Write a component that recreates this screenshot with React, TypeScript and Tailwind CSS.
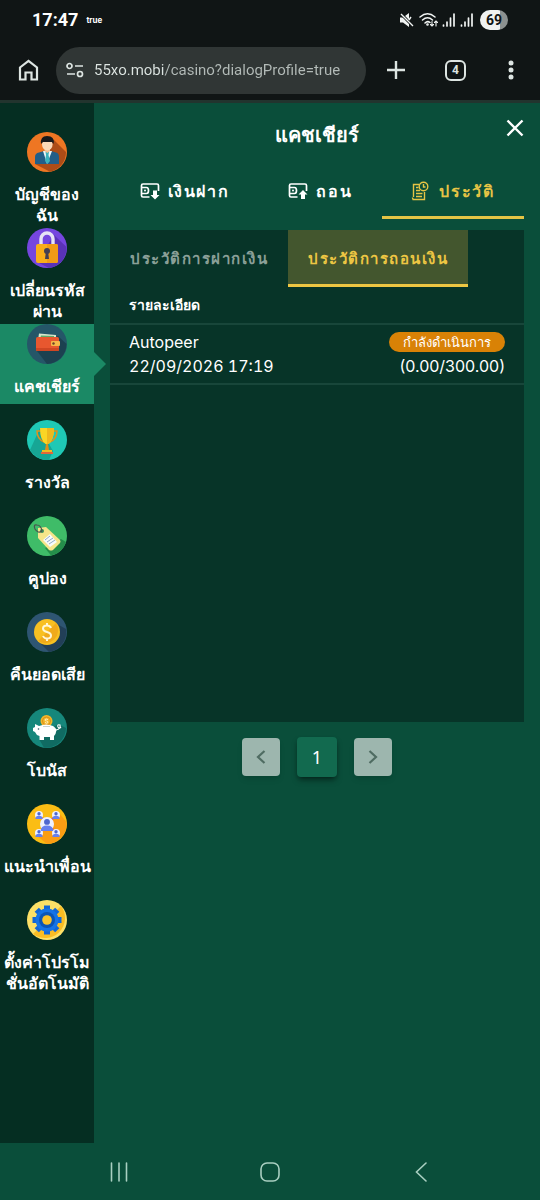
import type { ReactNode } from "react";
import { clsx } from "clsx";

interface MenuItem {
  id: string;
  label: string;
  icon: ReactNode;
}

const AccountIcon = () => (
  <svg viewBox="0 0 40 40" className="size-10 shrink-0">
    <circle cx="20" cy="20" r="20" fill="#ee7623" />
    <path d="M26 7 L39 20 A20 20 0 0 1 23 39.800 L8 32 Z" fill="#ad4c17" />
    <path d="M8 32 V25 Q8 21 12 20.500 L17 19 H24 L29 20.500 Q32 21 32 25 V32 Z" fill="#235e88" />
    <path d="M16 19 L20 32 L25 19 Z" fill="#eef5f7" />
    <path d="M18.500 20 H22 L21.500 23 L23 29 L20.500 32 L18 29 L19 23 Z" fill="#3cb3bd" />
    <path d="M17.500 16 H23 V19 L20.300 21 L17.500 19 Z" fill="#f0bd92" />
    <ellipse cx="20.300" cy="12.500" rx="5.300" ry="6" fill="#fbd9b7" />
    <path d="M14 12 Q13 4 20 4 Q28 4 26.500 12 L25 10 H16 Z" fill="#17191c" />
  </svg>
);

const LockIcon = () => (
  <svg viewBox="0 0 40 40" className="size-10 shrink-0">
    <circle cx="20" cy="20" r="20" fill="#7546df" />
    <path d="M27 7 L39.500 19 A20 20 0 0 1 22 39.900 L10 34 Z" fill="#5a32b8" />
    <path d="M14 18 V11 A6 6 0 0 1 26 11 V18" fill="none" stroke="#e6e3f5" strokeWidth="3.400" />
    <rect x="9" y="16" width="22" height="19" rx="2" fill="#f9ae19" />
    <path d="M20 16 H29 Q31 16 31 18 V33 Q31 35 29 35 H20 Z" fill="#f19b16" />
    <circle cx="20" cy="23" r="3" fill="#434052" />
    <path d="M19 23 H21 L22 31 H18 Z" fill="#434052" />
  </svg>
);

const WalletIcon = () => (
  <svg viewBox="0 0 40 40" className="size-10 shrink-0">
    <circle cx="20" cy="20" r="20" fill="#255668" />
    <path d="M31 12 L39.500 20 A20 20 0 0 1 20 40 L10 27 Z" fill="#1c4150" />
    <path d="M12 9.500 L29 11 V16 H11 Z" fill="#d7e7cd" />
    <path d="M14 11.500 L27 12 V15 H13 Z" fill="#5fa86a" />
    <rect x="9" y="13" width="23" height="14" rx="1.500" fill="#e8572f" />
    <path d="M9 24 H32 V26 Q32 27 31 27 H10 Q9 27 9 26 Z" fill="#cf4623" />
    <rect x="24" y="17" width="9" height="5" rx="1" fill="#f6b74a" />
    <circle cx="26.500" cy="19.500" r="1.200" fill="#6a4228" />
  </svg>
);

const TrophyIcon = () => (
  <svg viewBox="0 0 40 40" className="size-10 shrink-0">
    <circle cx="20" cy="20" r="20" fill="#1fc8b5" />
    <path d="M13 8 L3 30 A20 20 0 0 0 22 39.900 L26 31 Z" fill="#17a695" />
    <path d="M14 11 H10 Q10 19 17 22 M26 11 H30 Q30 19 23 22" fill="none" stroke="#e19019" strokeWidth="1.500" />
    <path d="M13 8 H27 Q27 20 21.500 24 H18.500 Q13 20 13 8 Z" fill="#fad525" />
    <path d="M20 8 H27 Q27 20 21.500 24 H20 Z" fill="#eeb81e" />
    <path d="M19 24 H21 L22 30 H18 Z" fill="#dc8e1a" />
    <path d="M15 30 H25 V32 H15 Z" fill="#f0bd22" />
    <path d="M14 32 H26 V34 H14 Z" fill="#e3663a" />
  </svg>
);

const CouponIcon = () => (
  <svg viewBox="0 0 40 40" className="size-10 shrink-0">
    <circle cx="20" cy="20" r="20" fill="#3fbc68" />
    <path d="M34 23 L39 26 A20 20 0 0 1 24 39.500 L18 32 Z" fill="#258e4b" />
    <path d="M11 12 L19 11 L33 24 Q34 26 33 27 L26 34 Q24 35 22 34 L11 22 Z" fill="#f5e58a" />
    <path d="M16 24 L23 18 L30 26 L23 31 Z" fill="#f8fbfa" />
    <path d="M18 24 L23 20 M20 26 L26 22 M22 28 L28 24" stroke="#93aac9" strokeWidth="1" />
    <circle cx="15" cy="15" r="2" fill="#39915a" />
    <path d="M15 15 Q11 18 8 13 Q6 8 10 9 Q14 9 15 15" fill="none" stroke="#4b5350" strokeWidth="1.200" />
  </svg>
);

const CashbackIcon = () => (
  <svg viewBox="0 0 40 40" className="size-10 shrink-0">
    <circle cx="20" cy="20" r="20" fill="#2e5572" />
    <path d="M30 12 L39 17 A20 20 0 0 1 22 39.900 L12 30 Z" fill="#223f57" />
    <circle cx="20" cy="20" r="13" fill="#f8c021" />
    <path d="M29 11 A13 13 0 0 1 11 29 Z" fill="#f0aa1b" />
    <path
      d="M24 16 Q23 13.500 20 13.500 Q16 13.500 16 16.500 Q16 19 20 20 Q24 21 24 23.500 Q24 26.500 20 26.500 Q17 26.500 16 24 M20 11 V14 M20 26 V29"
      fill="none"
      stroke="#fff6d4"
      strokeWidth="2"
    />
  </svg>
);

const BonusIcon = () => (
  <svg viewBox="0 0 40 40" className="size-10 shrink-0">
    <circle cx="20" cy="20" r="20" fill="#16877b" />
    <path d="M31 16 L39 20 A20 20 0 0 1 17 39.700 L12 31 Z" fill="#106b62" />
    <circle cx="19.500" cy="13" r="6" fill="#f3b629" />
    <circle cx="19.500" cy="13" r="4" fill="none" stroke="#d88f1a" strokeWidth="1" />
    <path d="M21 11.500 Q18 10 18 12 Q18 13 19.500 13 Q21 13 21 14.500 Q20 16 18 14.500" fill="none" stroke="#fff3c4" strokeWidth="1" />
    <path
      d="M8 16 L12 18 Q19 15 26 18 Q29 20 29.500 22 Q29 26 27 28 V32 H23 V29 H17 V32 H12.500 V28 Q9 27 8 24 L6 23 V20 L8 19 Z"
      fill="#fff"
    />
    <path d="M29 22 Q34 21 33 17 Q30 16 31 19 Q32 21 34 19" fill="none" stroke="#fff" strokeWidth="1.200" />
    <path d="M16 18.500 H23" stroke="#c8d3d2" strokeWidth="1" />
    <circle cx="11.500" cy="21" r="0.800" fill="#315360" />
  </svg>
);

const friends = [
  { x: 12, y: 11, s: 4 },
  { x: 29, y: 11, s: 4 },
  { x: 12, y: 29, s: 4 },
  { x: 29, y: 29, s: 4 },
  { x: 20, y: 20, s: 7 },
];

const FriendsIcon = () => (
  <svg viewBox="0 0 40 40" className="size-10 shrink-0">
    <circle cx="20" cy="20" r="20" fill="#fbbd14" />
    <path d="M32 9 L39.500 18 A20 20 0 0 1 20 40 L9 31 Z" fill="#fb9d14" />
    <path d="M12 11 L29 29 M29 11 L12 29" stroke="#dd5140" strokeWidth="2" />
    {friends.map(({ x, y, s }) => (
      <g key={`${x}-${y}`}>
        <circle cx={x} cy={y} r={s} fill="#eef1ff" />
        <circle cx={x} cy={y - s * 0.3} r={s * 0.42} fill="#4e67cf" />
        <path d={`M${x - s * 0.9} ${y + s} Q${x - s * 0.9} ${y + s * 0.2} ${x} ${y + s * 0.2} Q${x + s * 0.9} ${y + s * 0.2} ${x + s * 0.9} ${y + s} Z`} fill="#6680ee" />
      </g>
    ))}
  </svg>
);

const SettingsIcon = () => (
  <svg viewBox="0 0 40 40" className="size-10 shrink-0">
    <circle cx="20" cy="20" r="20" fill="#fde067" />
    <path d="M34 6 A20 20 0 0 1 6 34 Z" fill="#fbbd23" />
    {[0, 45, 90, 135].map((angle) => (
      <rect key={angle} x="17" y="5.500" width="6" height="29" fill="#1266d6" transform={`rotate(${angle} 20 20)`} />
    ))}
    <circle cx="20" cy="20" r="11.500" fill="#1673e6" />
    <circle cx="20" cy="20" r="8" fill="#0c55b5" />
    <circle cx="20" cy="20" r="4.800" fill="#fbc32b" />
  </svg>
);

const menu: MenuItem[] = [
  { id: "account", label: "บัญชีของ\nฉัน", icon: <AccountIcon /> },
  { id: "password", label: "เปลี่ยนรหัส\nผ่าน", icon: <LockIcon /> },
  { id: "cashier", label: "แคชเชียร์", icon: <WalletIcon /> },
  { id: "rewards", label: "รางวัล", icon: <TrophyIcon /> },
  { id: "coupon", label: "คูปอง", icon: <CouponIcon /> },
  { id: "cashback", label: "คืนยอดเสีย", icon: <CashbackIcon /> },
  { id: "bonus", label: "โบนัส", icon: <BonusIcon /> },
  { id: "friends", label: "แนะนำเพื่อน", icon: <FriendsIcon /> },
  { id: "auto-promo", label: "ตั้งค่าโปรโม\nชั่นอัตโนมัติ", icon: <SettingsIcon /> },
];

const SignalIcon = () => (
  <svg viewBox="0 0 14 14" className="h-3.5 w-3.5" fill="none" stroke="#f1f4f3" strokeWidth="1.700" strokeLinecap="round">
    <path d="M1.500 12 V13 M5 9 V13 M8.500 5 V13 M12 1 V13" />
  </svg>
);

const StatusBar = () => (
  <div className="flex h-10 items-center px-8 text-white">
    <span className="font-[Roboto] text-lg font-bold">17:47</span>
    <span className="ml-2 font-[Inter] text-[8px] font-bold">true</span>
    <div className="ml-auto flex items-center gap-1">
      <svg viewBox="0 0 16 16" className="size-4">
        <path d="M1 5.500 H4 L10 1 V15 L4 10.500 H1 Z" fill="#f1f4f3" />
        <path d="M1 1 L14 14" stroke="#101515" strokeWidth="3" />
        <path d="M2 2 L14 14 M12 5 L10 8" stroke="#f1f4f3" strokeWidth="1.400" />
      </svg>
      <svg viewBox="0 0 19 16" className="h-4 w-[19px]" fill="none" stroke="#f1f4f3" strokeWidth="1.500" strokeLinecap="round">
        <path d="M1 5 Q8.500 -1.500 16 5 M3.500 8 Q8.500 3.500 13.500 8 M6 11 Q8.500 8.500 11 10.500" />
        <circle cx="8.500" cy="12.500" r="0.600" />
        <path d="M13 9.500 V14 M11.500 12.500 L13 14 L14.500 12.500 M17 14 V9 M15.500 10.500 L17 9 L18.500 10.500" strokeWidth="1.100" />
      </svg>
      <SignalIcon />
      <SignalIcon />
      <span className="ml-0.5 flex h-5 w-7 items-center justify-center rounded-full bg-linear-to-r from-[#f0f2f1] from-70% to-[#8c9190] to-70% font-[Roboto] text-sm font-bold text-[#101515]">
        69
      </span>
    </div>
  </div>
);

const BrowserBar = () => (
  <div className="flex h-[60px] items-center pr-[26px] pl-[18px]">
    <button type="button" aria-label="Home" className="shrink-0">
      <svg viewBox="0 0 21 22" className="h-[22px] w-[21px]" fill="none" stroke="#dde5e2" strokeWidth="2.200">
        <path d="M2 8.500 L10.500 1.800 L19 8.500 V20.500 H13.500 V13.500 H7.500 V20.500 H2 Z" />
      </svg>
    </button>
    <div className="ml-[17px] flex h-[47px] min-w-0 flex-1 items-center rounded-full bg-[#303635] pr-4 pl-2.5">
      <button type="button" aria-label="Site information" className="shrink-0">
        <svg viewBox="0 0 18 16" className="h-4 w-[18px]" fill="none" stroke="#dde5e2" strokeWidth="1.700">
          <circle cx="3.500" cy="4" r="2.500" />
          <path d="M9 4 H17 M1 12 H9" />
          <circle cx="14" cy="12" r="2.500" />
        </svg>
      </button>
      <input
        type="text"
        aria-label="Address"
        readOnly
        value="55xo.mobi/casino?dialogProfile=true"
        className="ml-2.5 min-w-0 flex-1 bg-linear-to-r from-[#dde5e2] from-[71px] to-[#b3bbb8] to-[71px] bg-clip-text font-[Roboto] text-[15px] text-transparent outline-none"
      />
    </div>
    <div className="ml-5 flex shrink-0 items-center">
      <button type="button" aria-label="New tab">
        <svg viewBox="0 0 20 20" className="size-5" stroke="#dde5e2" strokeWidth="2.400">
          <path d="M10 1 V19 M1 10 H19" />
        </svg>
      </button>
      <button
        type="button"
        aria-label="4 open tabs"
        className="ml-[39px] flex size-[21px] items-center justify-center rounded-md border-2 border-[#dde5e2] font-[Roboto] text-xs font-bold text-[#dde5e2]"
      >
        4
      </button>
      <button type="button" aria-label="Menu" className="ml-[42px]">
        <svg viewBox="0 0 6 20" className="h-5 w-1.5" fill="#dde5e2">
          <circle cx="3" cy="3" r="2.500" />
          <circle cx="3" cy="10" r="2.500" />
          <circle cx="3" cy="17" r="2.500" />
        </svg>
      </button>
    </div>
  </div>
);

const Sidebar = ({ active }: { active: string }) => (
  <nav className="w-[94px] shrink-0 bg-[#052e22] pt-[29px]">
    <ul className="flex flex-col gap-4">
      {menu.map((item) => (
        <li key={item.id} className="h-20">
          <a
            href={`#${item.id}`}
            className={clsx(
              "relative flex h-20 flex-col items-center gap-3 text-center text-base leading-[21px] font-bold text-white",
              item.id === active && "bg-[#1b8965]"
            )}
          >
            {item.icon}
            <span className="whitespace-pre">{item.label}</span>
            {item.id === active && (
              <svg viewBox="0 0 12 24" className="absolute top-7 left-full h-6 w-3">
                <path d="M0 0 L12 12 L0 24 Z" fill="#1b8965" />
              </svg>
            )}
          </a>
        </li>
      ))}
    </ul>
  </nav>
);

const TransferIcon = ({ up }: { up?: boolean }) => (
  <svg viewBox="0 0 20 18" className="h-[18px] w-5" fill="none" stroke="#fff" strokeWidth="1.700">
    <path d="M9.500 15 H3 Q1.500 15 1.500 13.500 V3.500 Q1.500 2 3 2 H17 Q18.500 2 18.500 3.500 V9" />
    <path d="M1.500 5.500 H6.500 Q8.500 5.500 8.500 8.500 Q8.500 11.500 6.500 11.500 H1.500" />
    <circle cx="5" cy="8.500" r="1" fill="#fff" stroke="none" />
    <path d={up ? "M15 8 L19.500 12.500 H17 V17 H13 V12.500 H10.500 Z" : "M13 8.500 H17 V13 H19.500 L15 17.500 L10.500 13 H13 Z"} fill="#fff" stroke="none" />
  </svg>
);

const HistoryIcon = () => (
  <svg viewBox="0 0 18 20" className="h-5 w-[18px]" fill="none" stroke="currentColor" strokeWidth="1.400">
    <path d="M8 3.500 H2.500 V16 M13.500 11 V18.500 H3 Q1.500 18.500 1.500 16.500 M1.500 18.500 H13.500" />
    <path d="M5 6.500 H7.500 M5 9.500 H9 M5 12.500 H11.500 M5 15.500 H11" />
    <circle cx="12.500" cy="5.500" r="4.300" />
    <path d="M12.500 3 V6 H14.500" />
  </svg>
);

const Cashier = () => (
  <main className="min-w-0 flex-1 px-4">
    <header className="relative flex h-[62px] items-center justify-center pt-0.5">
      <h1 className="text-xl font-bold">แคชเชียร์</h1>
      <button type="button" aria-label="Close" className="absolute top-4 right-0">
        <svg viewBox="0 0 18 18" className="size-[18px]" stroke="#fff" strokeWidth="2.400">
          <path d="M1.500 1.500 L16.500 16.500 M16.500 1.500 L1.500 16.500" />
        </svg>
      </button>
    </header>

    <div role="tablist" className="flex h-[54px] text-base font-semibold tracking-widest">
      <button type="button" role="tab" className="flex flex-auto items-center justify-center gap-2 border-b-3 border-transparent">
        <TransferIcon />
        เงินฝาก
      </button>
      <button type="button" role="tab" className="flex flex-auto items-center justify-center gap-2 border-b-3 border-transparent">
        <TransferIcon up />
        ถอน
      </button>
      <button
        type="button"
        role="tab"
        aria-selected="true"
        className="flex flex-auto items-center justify-center gap-2.5 border-b-3 border-[#e5c445] text-[#e5c445]"
      >
        <HistoryIcon />
        ประวัติ
      </button>
    </div>

    <section className="mt-[11px] min-h-[492px] bg-[#073428]">
      <div role="tablist" className="flex h-[57px] text-[15px] font-semibold tracking-widest">
        <button type="button" role="tab" className="border-b-3 border-transparent px-5 pt-1 text-[#8ba098]">
          ประวัติการฝากเงิน
        </button>
        <button type="button" role="tab" aria-selected="true" className="border-b-3 border-[#edc643] bg-[#43562e] px-5 pt-1 text-[#edc643]">
          ประวัติการถอนเงิน
        </button>
      </div>

      <table className="w-full text-base">
        <thead>
          <tr className="h-[37px] border-b-2 border-[#18463a]">
            <th colSpan={2} className="px-[19px] text-left text-sm font-bold">
              รายละเอียด
            </th>
          </tr>
        </thead>
        <tbody>
          <tr className="h-[60px] border-b-2 border-[#18463a]">
            <td className="px-[19px] leading-6">
              <p>Autopeer</p>
              <p className="tabular-nums">22/09/2026 17:19</p>
            </td>
            <td className="px-[19px] leading-6">
              <div className="flex flex-col items-end">
                <span className="my-0.5 flex h-5 items-center rounded-full bg-[#d98206] px-3.5 text-[13px]">กำลังดำเนินการ</span>
                <span>(0.00/300.00)</span>
              </div>
            </td>
          </tr>
        </tbody>
      </table>
    </section>

    <nav aria-label="Pages" className="mt-[15px] flex items-center justify-center gap-[17px]">
      <button type="button" aria-label="Previous page" className="flex size-[38px] items-center justify-center rounded bg-[#9db6ae] shadow-md">
        <svg viewBox="0 0 10 14" className="h-3.5 w-2.5" fill="none" stroke="#4f6c62" strokeWidth="2.200">
          <path d="M8.500 1 L2 7 L8.500 13" />
        </svg>
      </button>
      <button type="button" aria-current="page" className="size-10 rounded bg-[#126a4f] font-['Noto_Sans'] text-lg shadow-md shadow-black/40">
        1
      </button>
      <button type="button" aria-label="Next page" className="flex size-[38px] items-center justify-center rounded bg-[#9db6ae] shadow-md">
        <svg viewBox="0 0 10 14" className="h-3.5 w-2.5" fill="none" stroke="#4f6c62" strokeWidth="2.200">
          <path d="M1.500 1 L8 7 L1.500 13" />
        </svg>
      </button>
    </nav>
  </main>
);

const SystemNav = () => (
  <footer className="grid h-[57px] grid-cols-3 place-items-center px-11">
    <button type="button" aria-label="Recent apps">
      <svg viewBox="0 0 18 20" className="h-5 w-[18px]" stroke="#a9cfc1" strokeWidth="1.600" strokeLinecap="round">
        <path d="M1.500 1 V19 M9 1 V19 M16.500 1 V19" />
      </svg>
    </button>
    <button type="button" aria-label="Home screen">
      <svg viewBox="0 0 20 20" className="size-5" fill="none" stroke="#a9cfc1" strokeWidth="1.600">
        <rect x="1" y="1" width="18" height="18" rx="6" />
      </svg>
    </button>
    <button type="button" aria-label="Back">
      <svg viewBox="0 0 12 20" className="h-5 w-3" fill="none" stroke="#a9cfc1" strokeWidth="1.600" strokeLinecap="round">
        <path d="M11 1 L1.500 10 L11 19" />
      </svg>
    </button>
  </footer>
);

const App = () => (
  <div className="flex min-h-screen flex-col bg-[#0a4e3a] font-[Inter,'Noto_Sans',sans-serif] text-white">
    <div className="border-b-3 border-[#22342e] bg-[#101515]">
      <StatusBar />
      <BrowserBar />
    </div>
    <div className="flex flex-1">
      <Sidebar active="cashier" />
      <Cashier />
    </div>
    <SystemNav />
  </div>
);

export default App;
